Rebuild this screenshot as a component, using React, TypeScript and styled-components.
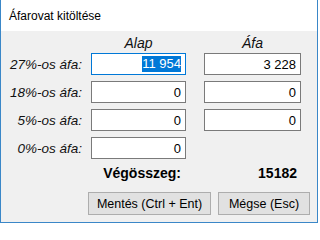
import React from 'react';
import styled, { createGlobalStyle } from 'styled-components';

const Global = createGlobalStyle`
  html, body {
    margin: 0;
    padding: 0;
    background: #fff;
  }
  * {
    box-sizing: border-box;
  }
`

const Window = styled.div`
  width: 318px;
  height: 223px;
  display: flex;
  flex-direction: column;
  background: #f0f0f0;
  border: solid 1px #3a87c8;
  border-top: none;
  font-family: "Liberation Sans", Arial, sans-serif;
  color: #000;
  overflow: hidden;
`
const TitleBar = styled.div`
  height: 31px;
  flex: none;
  display: flex;
  align-items: center;
  padding: 0 0 0 8px;
  background: #fff;
  font-size: 12px;
  color: #000;
`

const Form = styled.div`
  display: flex;
  flex-direction: column;
`
const Grid = styled.div`
  display: grid;
  grid-template-columns: 90px 113px 97px;
  align-items: center;
`
const HeaderRow = styled(Grid)`
  height: 22px;
  padding-top: 2px;
`
const Heading = styled.div<{ $col: number }>`
  grid-column: ${(p) => p.$col};
  font-size: 14px;
  font-style: italic;
  line-height: 20px;
  text-align: center;
  color: #111;
  width: ${(p) => (p.$col === 2 ? '95px' : '97px')};
`
const Rows = styled.div`
  display: flex;
  flex-direction: column;
  gap: 6px;
`
const FieldRow = styled(Grid)`
  height: 22px;
`
const Label = styled.div`
  grid-column: 1;
  padding-right: 9px;
  text-align: right;
  font-size: 13.5px;
  font-style: italic;
  color: #111;
`
const Field = styled.div<{ $col: number; $active?: boolean }>`
  grid-column: ${(p) => p.$col};
  width: ${(p) => (p.$col === 2 ? '95px' : '97px')};
  height: 22px;
  display: flex;
  align-items: center;
  justify-content: flex-end;
  padding: 0 4px;
  background: #fff;
  border: solid 1px ${(p) => (p.$active ? '#0078d7' : '#7a7a7a')};
  font-size: 13px;
`
const Selected = styled.span`
  background: #0078d7;
  color: #fff;
  line-height: 16px;
`

const TotalRow = styled(Grid)`
  height: 16px;
  font-size: 14px;
  font-weight: bold;
  line-height: 16px;
`
const TotalCell = styled.div<{ $col: number }>`
  grid-column: ${(p) => p.$col};
  width: ${(p) => (p.$col === 2 ? '95px' : '97px')};
  text-align: right;
  padding-right: ${(p) => (p.$col === 2 ? '5px' : '4px')};
`

const ButtonBar = styled.div`
  display: flex;
  justify-content: flex-end;
  gap: 7px;
  margin-top: 11px;
  padding-right: 7px;
`
const Button = styled.button<{ $width: number }>`
  appearance: none;
  outline: 0;
  width: ${(p) => p.$width}px;
  height: 23px;
  padding: 0;
  background: #e1e1e1;
  border: solid 1px #adadad;
  font-family: "Liberation Sans", Arial, sans-serif;
  font-size: 12.5px;
  color: #000;
  white-space: nowrap;
`

const rows = [
  { label: '27%-os áfa:', alap: '11 954', afa: '3 228', active: true },
  { label: '18%-os áfa:', alap: '0', afa: '0' },
  { label: '5%-os áfa:', alap: '0', afa: '0' },
  { label: '0%-os áfa:', alap: '0' },
];

const App: React.FC = () => {
  return (
    <>
      <Global />
      <Window>
        <TitleBar>Áfarovat kitöltése</TitleBar>
        <Form>
          <HeaderRow>
            <Heading $col={2}>Alap</Heading>
            <Heading $col={3}>Áfa</Heading>
          </HeaderRow>
          <Rows>
            {rows.map((r) => (
              <FieldRow key={r.label}>
                <Label>{r.label}</Label>
                <Field $col={2} $active={r.active}>
                  {r.active ? <Selected>{r.alap}</Selected> : r.alap}
                </Field>
                {r.afa !== undefined && <Field $col={3}>{r.afa}</Field>}
              </FieldRow>
            ))}
            <TotalRow>
              <TotalCell $col={2}>Végösszeg:</TotalCell>
              <TotalCell $col={3}>15182</TotalCell>
            </TotalRow>
          </Rows>
          <ButtonBar>
            <Button $width={123}>Mentés (Ctrl + Ent)</Button>
            <Button $width={92}>Mégse (Esc)</Button>
          </ButtonBar>
        </Form>
      </Window>
    </>
  );
};

export default App;
